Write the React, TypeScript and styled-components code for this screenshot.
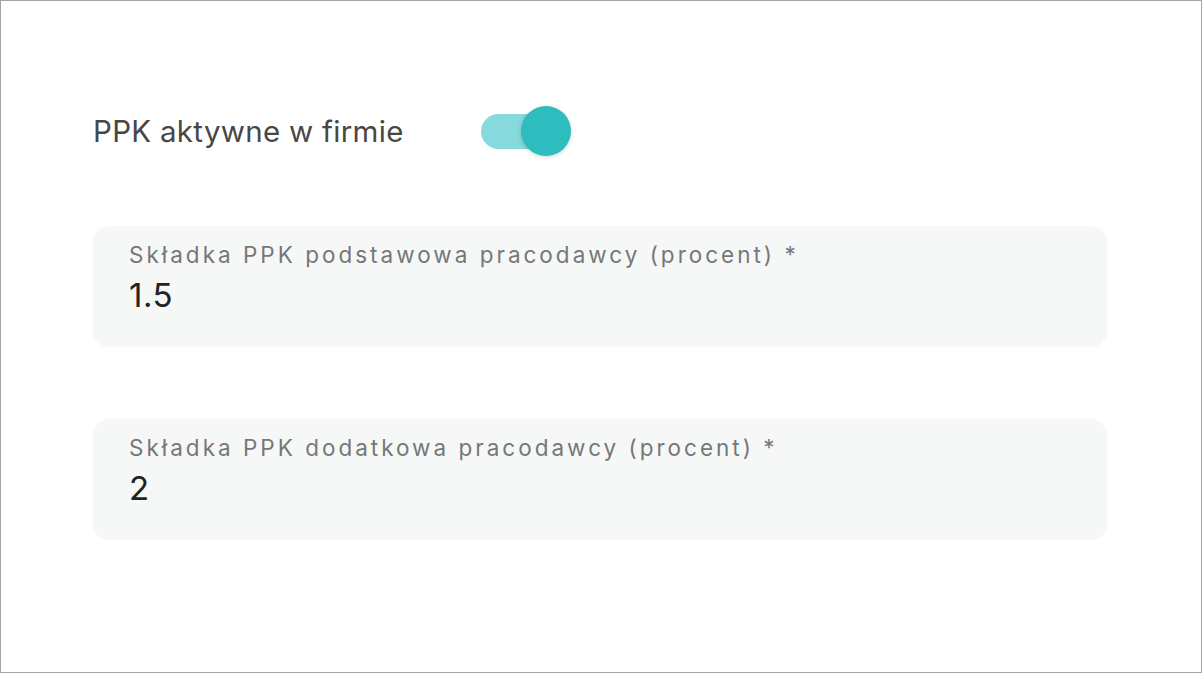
import styled, { createGlobalStyle } from 'styled-components';

const GlobalStyle = createGlobalStyle`
  html, body {
    margin: 0;
    padding: 0;
    background: #ffffff;
  }
  * { box-sizing: border-box; }
`;

const Frame = styled.div`
  width: 1202px;
  height: 673px;
  border: 1px solid #a3a3a3;
  background: #ffffff;
  font-family: Inter, 'Noto Sans', Arial, sans-serif;
  padding: 100px 94px 0 92px;
  display: flex;
  flex-direction: column;
`;

const SwitchRow = styled.div`
  display: flex;
  align-items: center;
  gap: 77px;
  height: 60px;
  margin-bottom: 65px;
`;

const SwitchLabel = styled.span`
  font-size: 29.5px;
  color: #474747;
  letter-spacing: 0.3px;
`;

const Track = styled.div<{ $on: boolean }>`
  position: relative;
  width: 80px;
  height: 35px;
  border-radius: 18px;
  background: ${(p) => (p.$on ? '#86d9dd' : '#cfcfcf')};
`;

const Thumb = styled.div<{ $on: boolean }>`
  position: absolute;
  top: 50%;
  left: ${(p) => (p.$on ? '40px' : '-6px')};
  width: 50px;
  height: 50px;
  margin-top: -25px;
  border-radius: 50%;
  background: #2dbdbf;
  box-shadow: 0 1px 4px rgba(0, 0, 0, 0.18);
`;

const Fields = styled.div`
  display: flex;
  flex-direction: column;
  gap: 72px;
`;

const Field = styled.div`
  height: 121px;
  border-radius: 16px;
  background: #f6f8f8;
  padding: 15px 36px 0 36px;
  display: flex;
  flex-direction: column;
  gap: 7px;
`;

const FieldLabel = styled.span`
  font-size: 22.5px;
  color: #777777;
  letter-spacing: 3px;
`;

const FieldValue = styled.span`
  font-size: 33px;
  color: #222222;
  letter-spacing: 0.5px;
`;

const fields = [
  { label: 'Składka PPK podstawowa pracodawcy (procent) *', value: '1.5' },
  { label: 'Składka PPK dodatkowa pracodawcy (procent) *', value: '2' },
];

export default function App() {
  return (
    <>
      <GlobalStyle />
      <Frame>
        <SwitchRow>
          <SwitchLabel>PPK aktywne w firmie</SwitchLabel>
          <Track $on>
            <Thumb $on />
          </Track>
        </SwitchRow>
        <Fields>
          {fields.map((f) => (
            <Field key={f.label}>
              <FieldLabel>{f.label}</FieldLabel>
              <FieldValue>{f.value}</FieldValue>
            </Field>
          ))}
        </Fields>
      </Frame>
    </>
  );
}
